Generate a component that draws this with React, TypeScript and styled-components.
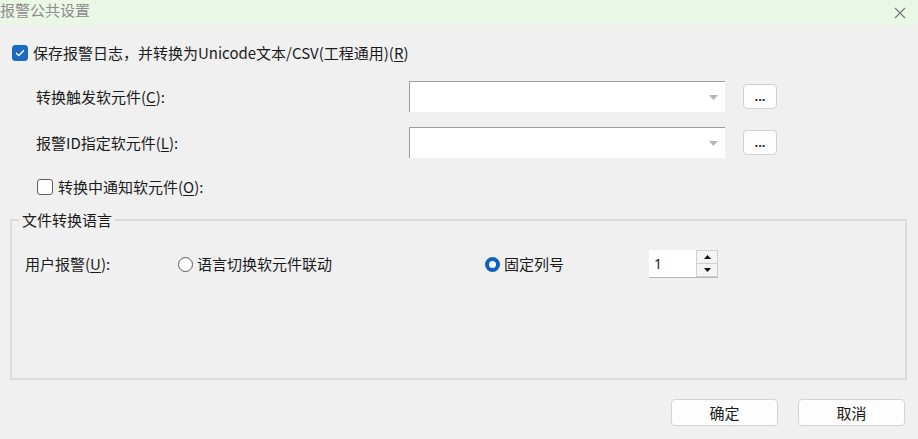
import React from "react";
import styled, { createGlobalStyle } from "styled-components";

const Global = createGlobalStyle`
  html, body { margin: 0; padding: 0; background: #f0f0f0; }
  body { font-family: "Noto Sans CJK SC", "Noto Sans", sans-serif; font-size: 15px; color: #1b1b1b; }
  * { box-sizing: border-box; }
`;

const Dialog = styled.div`
  width: 918px;
  height: 439px;
  background: #f0f0f0;
  display: flex;
  flex-direction: column;
  overflow: hidden;
`;

const TitleBar = styled.div`
  height: 25px;
  background: #ebf7e6;
  display: flex;
  align-items: center;
  justify-content: space-between;
  padding-right: 12px;
`;

const Title = styled.div`
  font-size: 15px;
  color: #8c8c8c;
  line-height: 20px;
  margin-top: -6px;
`;

const Body = styled.div`
  display: flex;
  flex-direction: column;
  padding: 19px 11px 0 12px;
`;

const CheckRow = styled.label<{ $indent?: number; $top?: number }>`
  display: flex;
  align-items: center;
  gap: 5px;
  height: 18px;
  margin-top: ${(p) => p.$top ?? 0}px;
  padding-left: ${(p) => p.$indent ?? 0}px;
  line-height: 18px;
`;

const Box = styled.span<{ $checked?: boolean }>`
  width: 16px;
  height: 16px;
  border-radius: 3px;
  flex: none;
  display: flex;
  align-items: center;
  justify-content: center;
  background: ${(p) => (p.$checked ? "#1c6bc0" : "#fdfdfd")};
  border: 1px solid ${(p) => (p.$checked ? "#1c6bc0" : "#5e5e5e")};
`;

const FieldRow = styled.div<{ $top: number }>`
  display: flex;
  align-items: center;
  margin-top: ${(p) => p.$top}px;
  padding-left: 24px;
  height: 31px;
`;

const FieldLabel = styled.div`
  width: 373px;
  line-height: 20px;
`;

const Combo = styled.div`
  width: 316px;
  height: 31px;
  background: #ffffff;
  border-top: 1px solid #9d9d9d;
  border-left: 1px solid #9d9d9d;
  display: flex;
  align-items: center;
  justify-content: flex-end;
  padding-right: 7px;
`;

const DotsButton = styled.button`
  margin-left: 18px;
  width: 34px;
  height: 25px;
  background: #fdfdfd;
  border: 1px solid #d0d0d0;
  border-radius: 4px;
  font-family: "Noto Sans", sans-serif;
  font-size: 13px;
  font-weight: 700;
  color: #222;
  padding: 0 0 5px 0;
  line-height: 14px;
  display: flex;
  align-items: flex-end;
  justify-content: center;
`;

const Group = styled.fieldset`
  margin: 14px 0 0 -2px;
  width: 897px;
  height: 170px;
  border: 2px solid #dcdcdc;
  border-radius: 0;
  padding: 0;
`;

const Legend = styled.legend`
  padding: 0 3px;
  margin-left: 7px;
  line-height: 20px;
`;

const GroupRow = styled.div`
  display: flex;
  align-items: center;
  margin-top: 20px;
  padding-left: 13px;
  height: 28px;
`;

const GroupLabel = styled.div`
  width: 153px;
  line-height: 20px;
`;

const RadioOption = styled.label<{ $width: number }>`
  display: flex;
  align-items: center;
  gap: 4px;
  width: ${(p) => p.$width}px;
  line-height: 20px;
`;

const Radio = styled.span<{ $checked?: boolean }>`
  width: 15px;
  height: 15px;
  border-radius: 50%;
  flex: none;
  background: #fff;
  border: ${(p) => (p.$checked ? "4px solid #0b62c2" : "1px solid #5a5a5a")};
`;

const Spin = styled.div`
  display: flex;
  height: 28px;
  border-bottom: 1px solid #b9b9b9;
`;

const SpinInput = styled.div`
  width: 47px;
  background: #fff;
  display: flex;
  align-items: center;
  padding-left: 5px;
  font-family: "Noto Sans", sans-serif;
  font-size: 14px;
  color: #222;
`;

const SpinButtons = styled.div`
  width: 22px;
  display: flex;
  flex-direction: column;
  gap: 1px;
  padding: 1px;
  background: #cfcfcf;
`;

const SpinBtn = styled.div`
  flex: 1;
  background: #f4f4f4;
  display: flex;
  align-items: center;
  justify-content: center;
`;

const Footer = styled.div`
  display: flex;
  justify-content: flex-end;
  gap: 20px;
  padding: 19px 13px 0 0;
`;

const DialogButton = styled.button`
  width: 107px;
  height: 27px;
  background: #fdfdfd;
  border: 1px solid #d3d3d3;
  border-radius: 4px;
  font-family: "Noto Sans CJK SC", sans-serif;
  font-size: 15px;
  color: #1b1b1b;
  padding: 0;
  line-height: 20px;
`;

const U = styled.span`
  text-decoration: underline;
  text-underline-offset: 2px;
`;

const Arrow = ({ up }: { up?: boolean }) => (
  <svg width="7" height="4" viewBox="0 0 7 4">
    <path d={up ? "M0 4 L3.5 0 L7 4 Z" : "M0 0 L7 0 L3.5 4 Z"} fill="#111" />
  </svg>
);

const ComboArrow = () => (
  <svg width="9" height="5" viewBox="0 0 9 5">
    <path d="M0 0 L9 0 L4.5 5 Z" fill="#b4b4b4" />
  </svg>
);

export default function App() {
  return (
    <>
      <Global />
      <Dialog>
        <TitleBar>
          <Title>报警公共设置</Title>
          <svg width="12" height="12" viewBox="0 0 12 12">
            <path d="M1 1 L11 11 M11 1 L1 11" stroke="#777" strokeWidth="1.2" />
          </svg>
        </TitleBar>
        <Body>
          <CheckRow>
            <Box $checked>
              <svg width="10" height="8" viewBox="0 0 10 8">
                <path d="M1 4 L3.8 6.6 L9 1.2" fill="none" stroke="#fff" strokeWidth="1.4" />
              </svg>
            </Box>
            <span>
              保存报警日志，并转换为Unicode文本/CSV(工程通用)(<U>R</U>)
            </span>
          </CheckRow>
          <FieldRow $top={19}>
            <FieldLabel>
              转换触发软元件(<U>C</U>):
            </FieldLabel>
            <Combo>
              <ComboArrow />
            </Combo>
            <DotsButton>...</DotsButton>
          </FieldRow>
          <FieldRow $top={15}>
            <FieldLabel>
              报警ID指定软元件(<U>L</U>):
            </FieldLabel>
            <Combo>
              <ComboArrow />
            </Combo>
            <DotsButton>...</DotsButton>
          </FieldRow>
          <CheckRow $indent={25} $top={20}>
            <Box />
            <span>
              转换中通知软元件(<U>O</U>):
            </span>
          </CheckRow>
          <Group>
            <Legend>文件转换语言</Legend>
            <GroupRow>
              <GroupLabel>
                用户报警(<U>U</U>):
              </GroupLabel>
              <RadioOption $width={307}>
                <Radio />
                <span>语言切换软元件联动</span>
              </RadioOption>
              <RadioOption $width={164}>
                <Radio $checked />
                <span>固定列号</span>
              </RadioOption>
              <Spin>
                <SpinInput>1</SpinInput>
                <SpinButtons>
                  <SpinBtn>
                    <Arrow up />
                  </SpinBtn>
                  <SpinBtn>
                    <Arrow />
                  </SpinBtn>
                </SpinButtons>
              </Spin>
            </GroupRow>
          </Group>
        </Body>
        <Footer>
          <DialogButton>确定</DialogButton>
          <DialogButton>取消</DialogButton>
        </Footer>
      </Dialog>
    </>
  );
}
